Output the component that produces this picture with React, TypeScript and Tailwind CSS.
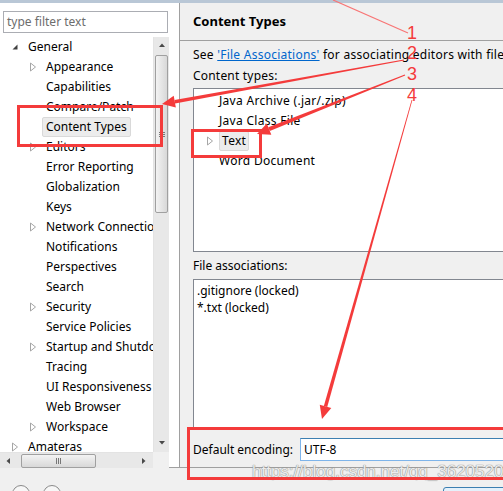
import React from "react";

// ── Tree data ────────────────────────────────────────────────────────────────

type Node = { label: string; depth: 0 | 1; kind: "open" | "closed" | "leaf"; selected?: boolean };

const TREE: Node[] = [
  { label: "General", depth: 0, kind: "open" },
  { label: "Appearance", depth: 1, kind: "closed" },
  { label: "Capabilities", depth: 1, kind: "leaf" },
  { label: "Compare/Patch", depth: 1, kind: "leaf" },
  { label: "Content Types", depth: 1, kind: "leaf", selected: true },
  { label: "Editors", depth: 1, kind: "closed" },
  { label: "Error Reporting", depth: 1, kind: "leaf" },
  { label: "Globalization", depth: 1, kind: "leaf" },
  { label: "Keys", depth: 1, kind: "leaf" },
  { label: "Network Connections", depth: 1, kind: "closed" },
  { label: "Notifications", depth: 1, kind: "leaf" },
  { label: "Perspectives", depth: 1, kind: "leaf" },
  { label: "Search", depth: 1, kind: "leaf" },
  { label: "Security", depth: 1, kind: "closed" },
  { label: "Service Policies", depth: 1, kind: "leaf" },
  { label: "Startup and Shutdown", depth: 1, kind: "closed" },
  { label: "Tracing", depth: 1, kind: "leaf" },
  { label: "UI Responsiveness", depth: 1, kind: "leaf" },
  { label: "Web Browser", depth: 1, kind: "leaf" },
  { label: "Workspace", depth: 1, kind: "closed" },
  { label: "Amateras", depth: 0, kind: "closed" },
];

// ── Small drawings ───────────────────────────────────────────────────────────

function Expander({ kind }: { kind: Node["kind"] }) {
  if (kind === "leaf") return <span className="w-[13px] shrink-0" />;
  return (
    <span className="w-[13px] shrink-0 flex items-center">
      {kind === "open" ? (
        <svg width="8" height="8" viewBox="0 0 8 8">
          <path d="M6.5 1.5 L6.5 6.5 L1.5 6.5 Z" fill="#404040" />
        </svg>
      ) : (
        <svg width="8" height="10" viewBox="0 0 8 10">
          <path d="M1.5 1 L6.5 5 L1.5 9 Z" fill="#fff" stroke="#a6a6a6" strokeWidth="1" />
        </svg>
      )}
    </span>
  );
}

function Arrow({ dir }: { dir: "up" | "down" | "left" | "right" }) {
  const d = {
    up: "M1 5 L4 1.5 L7 5 Z",
    down: "M1 2 L4 5.5 L7 2 Z",
    left: "M5 1 L1.5 4 L5 7 Z",
    right: "M2 1 L5.5 4 L2 7 Z",
  }[dir];
  return (
    <svg width="8" height="8" viewBox="0 0 8 8">
      <path d={d} fill="#4a4a4a" />
    </svg>
  );
}

// tapered red stroke with an arrow head at the thick end
function Stroke({ x1, y1, x2, y2, w1, w2, head }: { x1: number; y1: number; x2: number; y2: number; w1: number; w2: number; head?: boolean }) {
  const dx = x2 - x1;
  const dy = y2 - y1;
  const len = Math.hypot(dx, dy);
  const ux = dx / len;
  const uy = dy / len;
  const px = -uy;
  const py = ux;
  const hl = head ? 13 : 0;
  const ex = x2 - ux * hl;
  const ey = y2 - uy * hl;
  const pts = [
    [x1 + px * w1 / 2, y1 + py * w1 / 2],
    [ex + px * w2 / 2, ey + py * w2 / 2],
    [ex - px * w2 / 2, ey - py * w2 / 2],
    [x1 - px * w1 / 2, y1 - py * w1 / 2],
  ];
  const hw = 6;
  const headPts = [
    [x2, y2],
    [ex + px * hw, ey + py * hw],
    [ex - px * hw, ey - py * hw],
  ];
  return (
    <g fill="#f43b3b">
      <polygon points={pts.map((p) => p.join(",")).join(" ")} />
      {head && <polygon points={headPts.map((p) => p.join(",")).join(" ")} />}
    </g>
  );
}

// ── App ──────────────────────────────────────────────────────────────────────

export default function App() {
  return (
    <div className="relative w-[503px] h-[491px] overflow-hidden bg-[#f0f0f0] text-[12px] text-black font-['Noto_Sans','Liberation_Sans',sans-serif]">
      <div className="h-[3px] bg-[#b9c7d6]" />

      <div className="flex h-[464px]">
        {/* Left: filter + tree */}
        <div className="w-[180px] shrink-0 bg-white border-r border-[#a0a0a0] flex flex-col">
          <div className="pt-[8px] pl-[3px]">
            <div className="w-[165px] h-[22px] border border-[#abadb3] flex items-center px-[3px] text-[#6d6d6d] leading-none">
              type filter text
            </div>
          </div>

          <div className="mt-[4px] flex flex-col">
            <div className="flex h-[415px]">
              <div className="w-[153px] overflow-hidden">
                {TREE.map((n) => (
                  <div
                    key={n.label}
                    className={`h-[20px] flex items-center whitespace-nowrap ${n.depth === 0 ? "pl-[11px]" : "pl-[29px]"}`}
                  >
                    <Expander kind={n.kind} />
                    <span
                      className={`h-[20px] flex items-center px-[3px] leading-none rounded-[2px] ${
                        n.selected ? "bg-[#ececec] border border-[#d9d9d9]" : "border border-transparent"
                      }`}
                    >
                      {n.label}
                    </span>
                  </div>
                ))}
              </div>
              {/* vertical scrollbar */}
              <div className="w-[16px] bg-[#e8e8e8] border-l border-[#e3e3e3] flex flex-col">
                <div className="h-[18px] flex items-center justify-center">
                  <Arrow dir="up" />
                </div>
                <div className="mx-[1px] h-[158px] rounded-[2px] border border-[#a0a0a0] bg-gradient-to-r from-[#f3f3f3] to-[#d8d8d8] flex flex-col items-center justify-center gap-[1px]">
                  <div className="w-[6px] h-px bg-[#777]" />
                  <div className="w-[6px] h-px bg-[#777]" />
                  <div className="w-[6px] h-px bg-[#777]" />
                </div>
                <div className="flex-1" />
                <div className="h-[18px] flex items-center justify-center">
                  <Arrow dir="down" />
                </div>
              </div>
            </div>
            {/* horizontal scrollbar */}
            <div className="flex h-[16px]">
              <div className="w-[153px] bg-[#e8e8e8] border-t border-[#e3e3e3] flex items-center">
                <div className="w-[18px] flex items-center justify-center">
                  <Arrow dir="left" />
                </div>
                <div className="ml-[3px] w-[75px] h-[14px] rounded-[2px] border border-[#a0a0a0] bg-gradient-to-b from-[#f3f3f3] to-[#d8d8d8] flex items-center justify-center gap-[1px]">
                  <div className="w-px h-[6px] bg-[#777]" />
                  <div className="w-px h-[6px] bg-[#777]" />
                  <div className="w-px h-[6px] bg-[#777]" />
                </div>
                <div className="flex-1" />
                <div className="w-[18px] flex items-center justify-center">
                  <Arrow dir="right" />
                </div>
              </div>
              <div className="w-[16px] bg-[#f0f0f0]" />
            </div>
          </div>
        </div>

        {/* Right: Content Types page */}
        <div className="flex-1 overflow-hidden flex flex-col">
          <div className="h-[38px] shrink-0 border-b border-[#a0a0a0] flex items-center pl-[13px] pt-[1px] font-bold text-[13px]">
            Content Types
          </div>
          <div className="pl-[13px] w-[380px] flex flex-col">
            <div className="mt-[6px] h-[16px] flex items-center whitespace-nowrap tracking-[0.25px]">
              See&nbsp;<span className="text-[#0066cc] underline">'File Associations'</span>&nbsp;for associating editors with file types.
            </div>
            <div className="mt-[5px] h-[16px] flex items-center tracking-[0.2px]">Content types:</div>
            <div className="mt-[4px] h-[164px] bg-white border border-[#828790] pt-[2px] tracking-[0.3px]">
              <div className="h-[20px] flex items-center pl-[25px]">Java Archive (.jar/.zip)</div>
              <div className="h-[20px] flex items-center pl-[25px]">Java Class File</div>
              <div className="h-[20px] flex items-center pl-[12px]">
                <Expander kind="closed" />
                <span className="h-[20px] flex items-center px-[2px] rounded-[2px] bg-[#ececec] border border-[#d9d9d9]">Text</span>
              </div>
              <div className="h-[20px] flex items-center pl-[25px]">Word Document</div>
            </div>
            <div className="mt-[6px] h-[16px] flex items-center">File associations:</div>
            <div className="mt-[5px] h-[151px] bg-white border border-[#828790] pl-[3px] pt-[2px]">
              <div className="h-[17px] flex items-center">.gitignore (locked)</div>
              <div className="h-[17px] flex items-center">*.txt (locked)</div>
            </div>
            <div className="mt-[8px] flex items-center">
              <span className="w-[107px]">Default encoding:</span>
              <div className="w-[260px] h-[23px] bg-white border border-[#7eb4ea] border-t-[#3c7fb1] flex items-center pl-[3px]">
                UTF-8
              </div>
            </div>
          </div>
        </div>
      </div>

      {/* Bottom button bar */}
      <div className="h-[24px] border-t border-[#a0a0a0] flex pt-[17px]">
        <div className="ml-[12px] w-[18px] h-[18px] rounded-full border border-[#8a8a8a] bg-[#f7f7f7]" />
        <div className="ml-[13px] w-[18px] h-[18px] rounded-full border border-[#8a8a8a] bg-[#f7f7f7]" />
        <div className="ml-auto mr-[-20px] mt-[2px] w-[80px] h-[23px] rounded-[3px] border border-[#3c7fb1] bg-[#e5f1fb]" />
      </div>

      {/* Watermark */}
      <div className="absolute left-[252px] top-[459px] text-[17px] font-['Liberation_Sans',sans-serif] text-[#ececec] [text-shadow:0_0_1px_#888,0_0_1px_#888] whitespace-nowrap">
        https://blog.csdn.net/qq_36205206
      </div>

      {/* Annotation boxes */}
      <div className="absolute left-[17px] top-[105px] w-[146px] h-[42px] border-[3px] border-[#f43b3b]" />
      <div className="absolute left-[191px] top-[129px] w-[71px] h-[29px] border-[3px] border-[#f43b3b]" />
      <div className="absolute left-[187px] top-[427px] w-[330px] h-[53px] border-[3px] border-[#f43b3b]" />

      {/* Annotation strokes */}
      <svg className="absolute inset-0 pointer-events-none" width="503" height="491">
        <line x1="333" y1="0" x2="408" y2="33" stroke="#f87575" strokeWidth="1.2" />
        <Stroke x1={404} y1={60} x2={162} y2={104} w1={1} w2={3.5} head />
        <Stroke x1={405} y1={75} x2={257} y2={134} w1={1} w2={4} head />
        <Stroke x1={412} y1={100} x2={322} y2={419} w1={0.8} w2={3.5} head />
      </svg>

      {/* Annotation numbers */}
      <div className="absolute left-[407px] top-[23px] text-[18px] leading-[20px] text-[#f43b3b] font-['Liberation_Sans',sans-serif]">1</div>
      <div className="absolute left-[407px] top-[43px] text-[18px] leading-[20px] text-[#f43b3b] font-['Liberation_Sans',sans-serif]">2</div>
      <div className="absolute left-[407px] top-[64px] text-[18px] leading-[20px] text-[#f43b3b] font-['Liberation_Sans',sans-serif]">3</div>
      <div className="absolute left-[407px] top-[85px] text-[18px] leading-[20px] text-[#f43b3b] font-['Liberation_Sans',sans-serif]">4</div>
    </div>
  );
}
